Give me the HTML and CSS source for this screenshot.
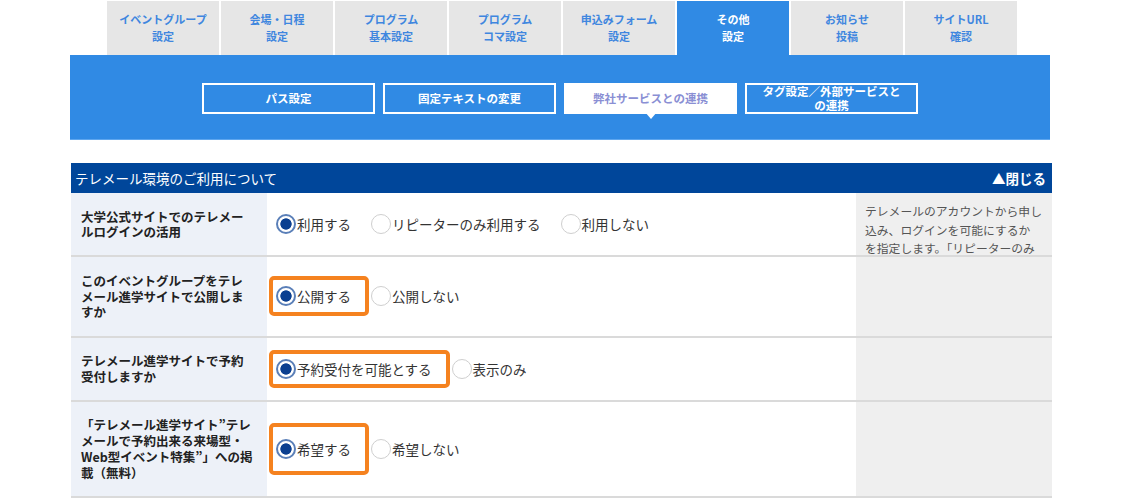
FILE: index.html
```html
<!DOCTYPE html>
<html lang="ja">
<head>
    <meta charset="UTF-8">
    <title>その他設定 - 弊社サービスとの連携</title>
    <link rel="stylesheet" href="styles.css">
</head>
<body>

<div class="tabs">
    <div class="tab">イベントグループ<br>設定</div>
    <div class="tab">会場・日程<br>設定</div>
    <div class="tab">プログラム<br>基本設定</div>
    <div class="tab">プログラム<br>コマ設定</div>
    <div class="tab">申込みフォーム<br>設定</div>
    <div class="tab active">その他<br>設定</div>
    <div class="tab">お知らせ<br>投稿</div>
    <div class="tab">サイトURL<br>確認</div>
</div>

<div class="subnav">
    <div class="subbtn">パス設定</div>
    <div class="subbtn">固定テキストの変更</div>
    <div class="subbtn current">弊社サービスとの連携</div>
    <div class="subbtn">タグ設定／外部サービスとの連携</div>
</div>

<div class="panel">
    <div class="panel-head">
        <span>テレメール環境のご利用について</span>
        <span class="close">▲閉じる</span>
    </div>

    <div class="row">
        <div class="label">大学公式サイトでのテレメールログインの活用</div>
        <div class="opts">
            <span class="opt"><span class="radio on"></span>利用する</span>
            <span class="opt"><span class="radio"></span>リピーターのみ利用する</span>
            <span class="opt"><span class="radio"></span>利用しない</span>
        </div>
        <div class="note"><p>テレメールのアカウントから申し込み、ログインを可能にするか<br>を指定します。「リピーターのみ</p></div>
    </div>

    <div class="row">
        <div class="label">このイベントグループをテレメール進学サイトで公開しますか</div>
        <div class="opts">
            <span class="opt mark"><span class="radio on"></span>公開する</span>
            <span class="opt"><span class="radio"></span>公開しない</span>
        </div>
        <div class="note"></div>
    </div>

    <div class="row">
        <div class="label">テレメール進学サイトで予約受付しますか</div>
        <div class="opts">
            <span class="opt mark short"><span class="radio on"></span>予約受付を可能とする</span>
            <span class="opt"><span class="radio"></span>表示のみ</span>
        </div>
        <div class="note"></div>
    </div>

    <div class="row">
        <div class="label">「テレメール進学サイト”テレメールで予約出来る来場型・Web型イベント特集”」への掲載（無料）</div>
        <div class="opts">
            <span class="opt mark tall"><span class="radio on"></span>希望する</span>
            <span class="opt"><span class="radio"></span>希望しない</span>
        </div>
        <div class="note"></div>
    </div>
</div>

</body>
</html>
```

FILE: styles.css
```css
body {
    margin: 0;
    background: #fff;
    color: #333;
    font-family: "Noto Sans CJK JP", "Noto Sans", sans-serif;
}

/* top tabs */
.tabs {
    display: flex;
    gap: 2px;
    margin: 1px 0 0 107px;
}
.tab {
    width: 112px;
    height: 54px;
    box-sizing: border-box;
    padding-top: 10px;
    background: #e6e6e6;
    color: #3f86df;
    font-size: 11px;
    font-weight: bold;
    line-height: 17px;
    text-align: center;
}
.tab.active {
    background: #308ae4;
    color: #fff;
}

/* sub navigation band */
.subnav {
    display: flex;
    justify-content: center;
    gap: 8px;
    width: 980px;
    height: 85px;
    box-sizing: border-box;
    margin-left: 70px;
    padding-top: 28px;
    background: #308ae4;
    border-bottom: 1px solid #5ea6ee;
}
.subbtn {
    position: relative;
    display: flex;
    align-items: center;
    justify-content: center;
    width: 173px;
    height: 31px;
    box-sizing: border-box;
    padding: 0 12px;
    border: 2px solid #fff;
    color: #fff;
    font-size: 11.5px;
    font-weight: bold;
    line-height: 13.5px;
    text-align: center;
}
.subbtn.current {
    background: #fff;
    color: #8a8fd4;
}
.subbtn.current::after {
    content: "";
    position: absolute;
    left: 50%;
    top: 100%;
    margin-left: -6px;
    border-left: 6px solid transparent;
    border-right: 6px solid transparent;
    border-top: 7px solid #fff;
}

/* settings panel */
.panel {
    width: 981px;
    margin: 23px 0 0 71px;
}
.panel-head {
    display: flex;
    justify-content: space-between;
    align-items: center;
    height: 30px;
    padding: 0 6px 0 4px;
    background: #00469a;
    color: #fff;
    font-size: 13.5px;
}
.panel-head .close { font-weight: bold; }

.row {
    display: grid;
    grid-template-columns: 196px 1fr 196px;
    border-bottom: 2px solid #dadada;
}
.label {
    padding: 15.5px 12px 15.5px 10px;
    background: #edf1f8;
    color: #222;
    font-size: 12.5px;
    font-weight: bold;
    line-height: 15.7px;
}
.opts {
    display: flex;
    align-items: center;
    gap: 20px;
    padding-left: 9px;
}
.opt {
    display: inline-flex;
    align-items: center;
    gap: 1px;
    font-size: 13.5px;
    line-height: 20px;
    color: #333;
}
.radio {
    width: 20px;
    height: 20px;
    box-sizing: border-box;
    border: 1.5px solid #cfcfcf;
    border-radius: 50%;
    background: #fff;
}
.radio.on {
    border: 2px solid #5a7fb8;
    background: radial-gradient(circle, #0b3f90 0 5.3px, #fff 6px);
}

/* orange highlight drawn over the chosen option */
.mark { position: relative; }
.mark::after {
    content: "";
    position: absolute;
    inset: -10px -18px -10px -7px;
    border: 4px solid #f5821f;
    border-radius: 5px;
}
.mark.short::after { inset: -9px -18px -9px -7px; }
.mark.tall::after { inset: -16px -18px -16px -7px; }

.note {
    contain: size;
    overflow: hidden;
    background: #efefef;
}
.note p {
    margin: 0;
    padding: 9px 8px 0 9px;
    color: #555;
    font-size: 11.8px;
    line-height: 18.5px;
}
```
